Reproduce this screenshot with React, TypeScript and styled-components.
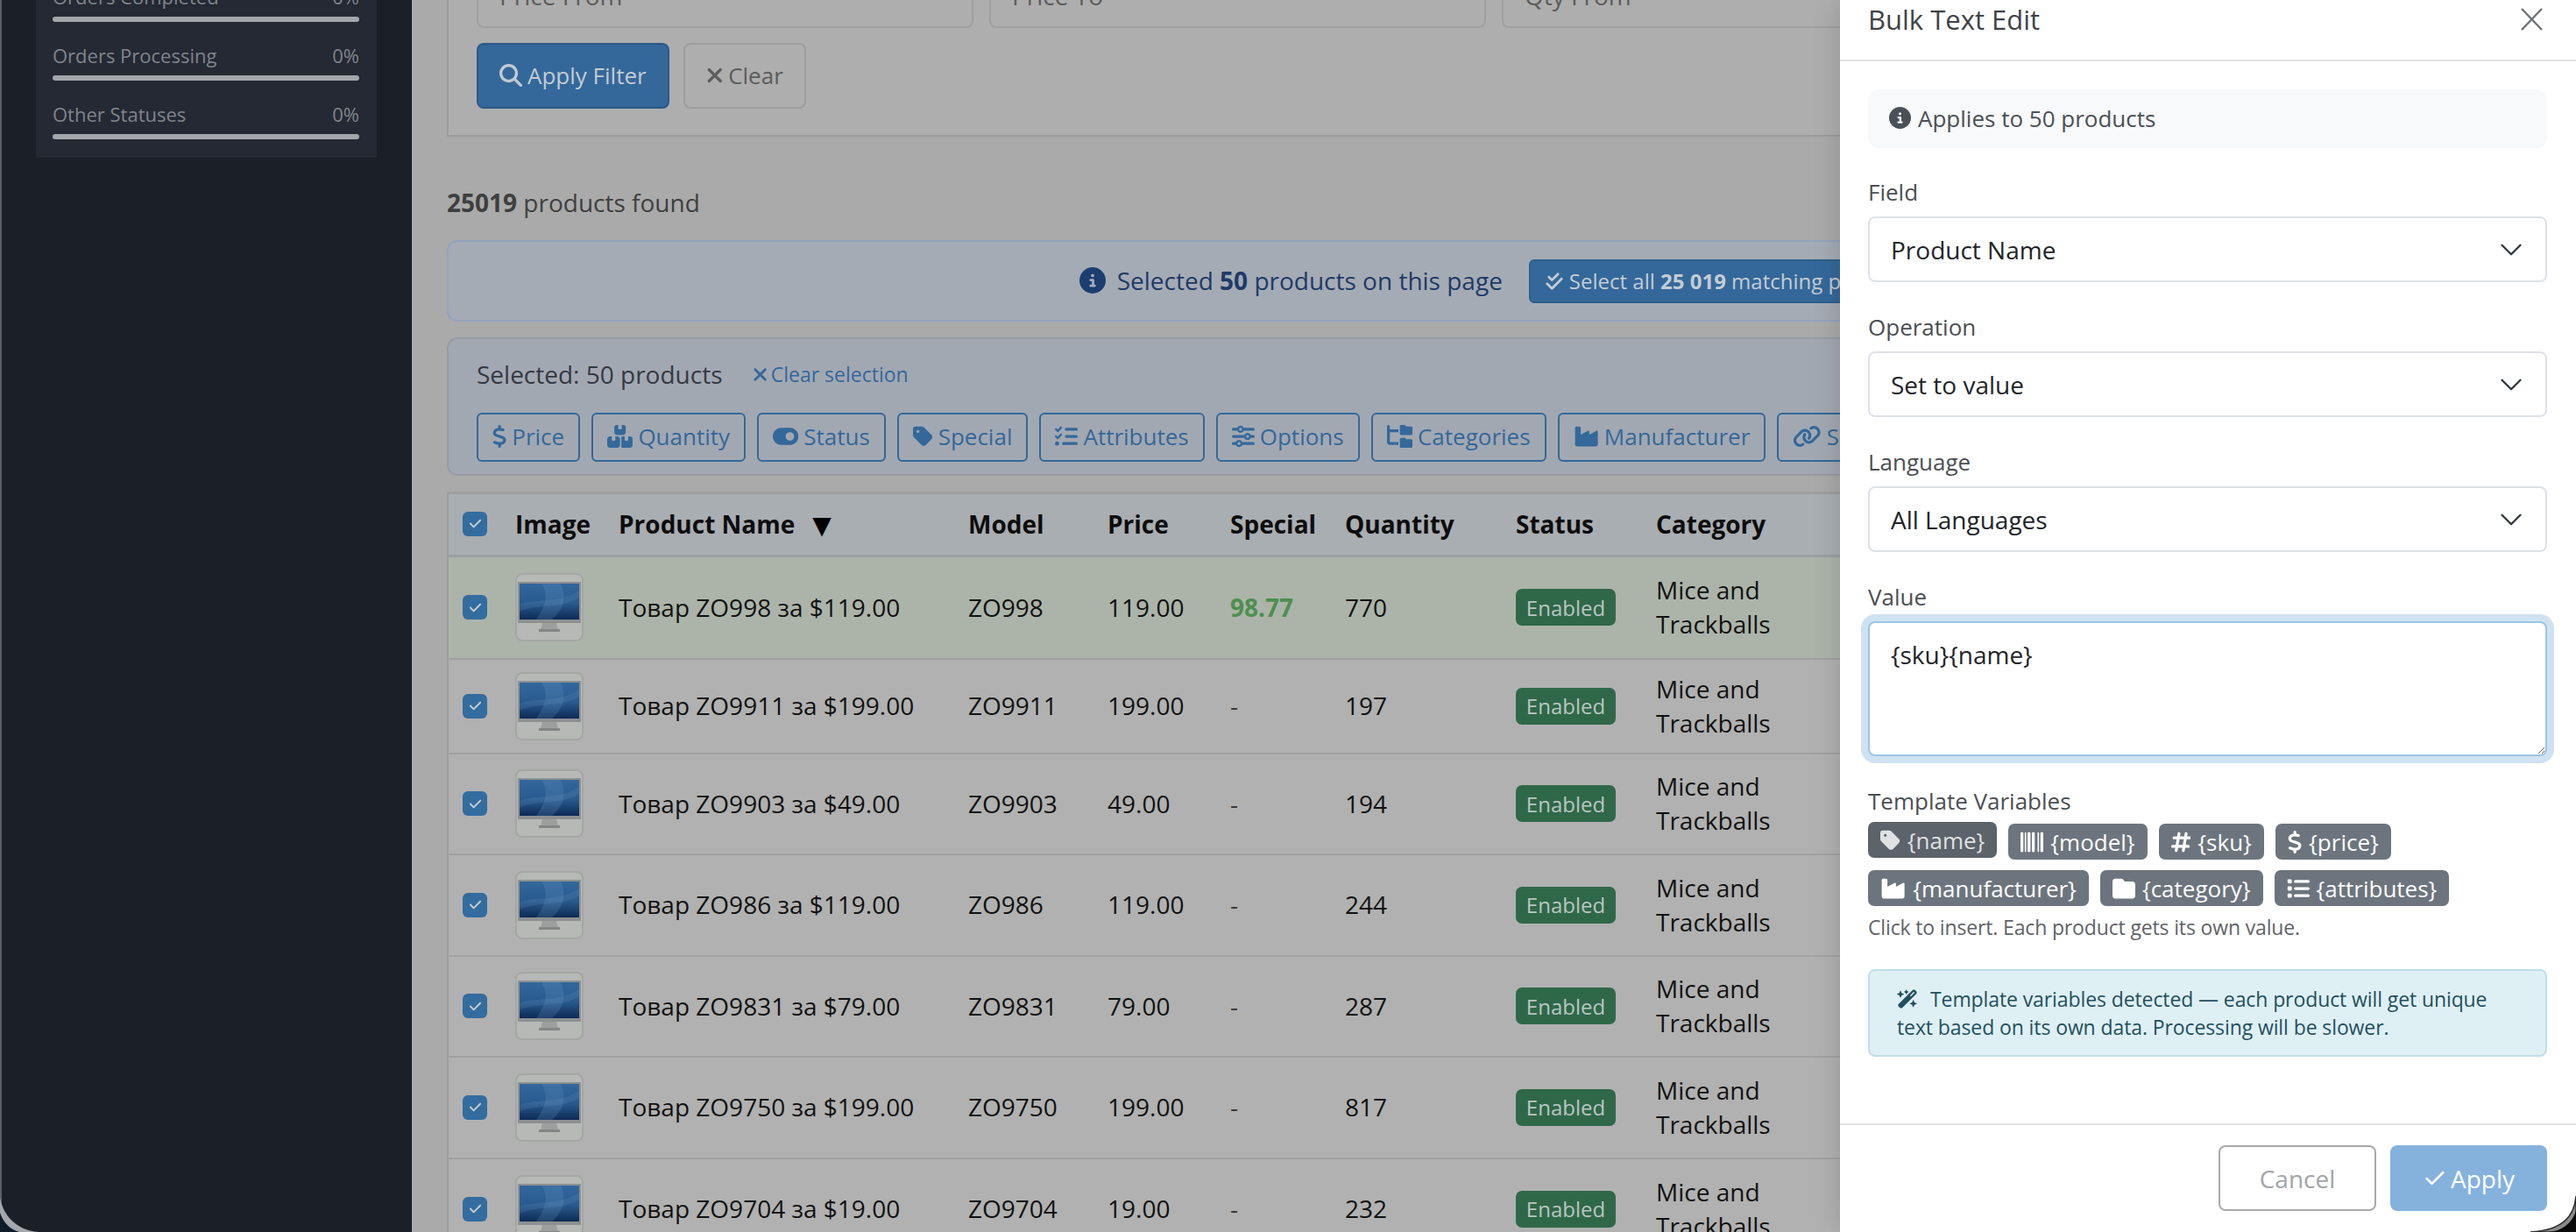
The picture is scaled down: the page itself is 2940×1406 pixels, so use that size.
import React from "react";
import styled, { createGlobalStyle } from "styled-components";
import { Check } from "lucide-react";
import {
  FaMagnifyingGlass, FaXmark, FaDollarSign, FaBoxesStacked, FaToggleOn, FaTag, FaListCheck, FaSliders,
  FaFolderTree, FaIndustry, FaLink, FaCircleInfo, FaCheckDouble, FaBarcode, FaHashtag, FaFolder, FaList,
  FaWandMagicSparkles, FaCheck,
} from "react-icons/fa6";

const Global = createGlobalStyle`
  html, body { margin: 0; padding: 0; background: #1b1f27; }
  body { font-family: "Open Sans", "Noto Sans", sans-serif; font-size: 28px; }
  * { box-sizing: border-box; }
`;

/* Icons keep the natural proportions of their glyph, as an icon font would draw them. */
const IconDollar = styled(FaDollarSign)`width: 0.625em; height: 1em; flex: none;`;
const IconBoxes = styled(FaBoxesStacked)`width: 1.125em; height: 1em; flex: none;`;
const IconToggle = styled(FaToggleOn)`width: 1.125em; height: 1em; flex: none;`;
const IconTag = styled(FaTag)`width: 0.875em; height: 1em; flex: none;`;
const IconListCheck = styled(FaListCheck)`width: 1em; height: 1em; flex: none;`;
const IconSliders = styled(FaSliders)`width: 1em; height: 1em; flex: none;`;
const IconTree = styled(FaFolderTree)`width: 1.125em; height: 1em; flex: none;`;
const IconIndustry = styled(FaIndustry)`width: 1.125em; height: 1em; flex: none;`;
const IconLink = styled(FaLink)`width: 1.25em; height: 1em; flex: none;`;
const IconXmark = styled(FaXmark)`width: 0.75em; height: 1em; flex: none;`;
const IconHash = styled(FaHashtag)`width: 0.875em; height: 1em; flex: none;`;

const Page = styled.div`
  position: relative;
  width: 2940px;
  height: 1406px;
  overflow: hidden;
  display: flex;
  background: #aaaaaa;
`;

const Sidebar = styled.aside`
  flex: 0 0 470px;
  background: #1b1f27;
  border-left: 2px solid #5c5f64;
  padding-left: 39px;
`;

const StatCard = styled.div`
  width: 389px;
  margin-top: -30px;
  padding: 11px 20px 21px 19px;
  background: #242933;
`;

const StatRow = styled.div`
  margin-bottom: 23px;
  &:last-child { margin-bottom: 0; }
`;

const StatHead = styled.div`
  display: flex;
  justify-content: space-between;
  font-size: 22px;
  line-height: 30px;
  color: #80848b;
`;

const StatBar = styled.div`
  height: 6px;
  margin-top: 8px;
  border-radius: 3px;
  background: #a3a6aa;
`;

const Main = styled.main`
  flex: 1;
  min-width: 0;
  padding-left: 40px;
`;

const Column = styled.div`
  width: 2416px;
  margin-top: -77px;
`;

const FilterCard = styled.section`
  border: 2px solid #9c9c9c;
  background: #aeaeae;
  padding: 32px 32px 30px;
`;

const FilterGrid = styled.div`
  display: grid;
  grid-template-columns: repeat(4, 567px);
  gap: 18px;
`;

const FilterInput = styled.input`
  height: 75px;
  padding: 0 24px;
  border: 2px solid #a0a0a0;
  border-radius: 8px;
  background: #aeaeae;
  font: 28px "Open Sans", sans-serif;
  &::placeholder { color: #5c5c5c; opacity: 1; }
`;

const FilterActions = styled.div`
  display: flex;
  gap: 16px;
  margin-top: 17px;
`;

const ActionButton = styled.button<{ $primary?: boolean }>`
  display: inline-flex;
  align-items: center;
  gap: 6px;
  height: 75px;
  padding: 0 24px 2px;
  border: 2px solid ${(p) => (p.$primary ? "#2b5a87" : "#9d9d9d")};
  border-radius: 8px;
  background: ${(p) => (p.$primary ? "#34689a" : "transparent")};
  color: ${(p) => (p.$primary ? "#c3cbd3" : "#5c5c5c")};
  font: 26px "Open Sans", sans-serif;
`;

const FoundText = styled.div`
  margin: 55px 0 23px;
  font-size: 28px;
  line-height: 40px;
  color: #3f3f3f;
  b { font-weight: 700; }
`;

const SelectAlert = styled.div`
  display: flex;
  align-items: center;
  justify-content: center;
  gap: 30px;
  height: 93px;
  border: 2px solid #93a3bf;
  border-radius: 12px;
  background: #a5abb4;
`;

const AlertText = styled.span`
  display: inline-flex;
  align-items: center;
  gap: 13px;
  padding-bottom: 2px;
  color: #1e3a68;
  font-size: 28px;
  b { font-weight: 700; white-space: pre; }
`;

const AlertWords = styled.span`
  white-space: pre;
`;

const SelectAllButton = styled.button`
  display: inline-flex;
  align-items: center;
  gap: 6px;
  height: 50px;
  padding: 0 16px;
  border: 2px solid #2d5f8e;
  border-radius: 6px;
  background: #34689a;
  color: #c4ccd4;
  font: 24px "Open Sans", sans-serif;
  white-space: pre;
  b { font-weight: 700; }
`;

const BulkBar = styled.div`
  height: 158px;
  margin-top: 18px;
  padding: 20px 32px 0;
  border: 2px solid #979ca4;
  border-radius: 12px;
  background: #a2a8b2;
`;

const BulkHead = styled.div`
  display: flex;
  align-items: center;
  gap: 34px;
  height: 40px;
  color: #343a42;
  font-size: 28px;
`;

const ClearLink = styled.span`
  display: inline-flex;
  align-items: center;
  gap: 4px;
  font-size: 23px;
  color: #34689a;
`;

const BulkActions = styled.div`
  display: flex;
  gap: 13px;
  margin-top: 24px;
`;

const BulkButton = styled.button`
  flex: none;
  display: inline-flex;
  align-items: center;
  gap: 6px;
  height: 56px;
  padding: 0 16px 2px;
  border: 2px solid #34689a;
  border-radius: 6px;
  background: transparent;
  color: #34689a;
  font: 26px "Open Sans", sans-serif;
`;

const Table = styled.table`
  width: 2403px;
  margin-top: 18px;
  table-layout: fixed;
  border-collapse: collapse;
  border-top: 3px solid #9e9e9e;
  border-left: 2px solid #9e9e9e;
`;

const Col = styled.col<{ $w: number }>`
  width: ${(p) => p.$w}px;
`;

const HeadRow = styled.tr`
  height: 72px;
  background: #a9aeb2;
  border-bottom: 3px solid #9aa0a5;
`;

const HeadCell = styled.th`
  padding: 0 0 2px 15px;
  text-align: left;
  font-size: 28px;
  font-weight: 700;
  color: #0d0d0d;
  white-space: nowrap;
`;

const SortMark = styled.span`
  margin-left: 20px;
  font-family: "DejaVu Sans", sans-serif;
  font-size: 28px;
  color: #000;
`;

const Row = styled.tr<{ $h: number; $hit?: boolean }>`
  height: ${(p) => p.$h}px;
  background: ${(p) => (p.$hit ? "#acb4a9" : "#b1b1b1")};
  border-bottom: 2px solid #a1a1a1;
`;

const Cell = styled.td`
  padding: 0 0 0 15px;
  font-size: 28px;
  line-height: 39px;
  color: #111111;
  vertical-align: middle;
`;

const CheckBox = styled.span`
  display: flex;
  align-items: center;
  justify-content: center;
  width: 28px;
  height: 28px;
  margin-left: 1px;
  border-radius: 6px;
  background: #336c9e;
  color: #c8ccd0;
  font-size: 15px;
`;

const Thumb = styled.div`
  width: 78px;
  height: 78px;
  border: 2px solid #a4a7a4;
  border-radius: 8px;
  overflow: hidden;
  background: #b7b9b6;
  svg { display: block; }
`;

const SpecialPrice = styled.span`
  font-weight: 700;
  color: #4e8f4e;
`;

const Dash = styled.span`
  color: #3a3a3a;
`;

const Badge = styled.span`
  display: inline-flex;
  align-items: center;
  justify-content: center;
  width: 114px;
  height: 42px;
  border-radius: 7px;
  background: #2f6849;
  color: #b9c6bf;
  font-size: 24px;
`;

const Panel = styled.aside`
  position: absolute;
  top: 0;
  right: 0;
  bottom: 0;
  width: 840px;
  display: flex;
  flex-direction: column;
  background: #fff;
  color: #212529;
  box-shadow: 0 0 30px rgba(0, 0, 0, 0.16);
`;

const PanelHead = styled.header`
  flex: none;
  display: flex;
  align-items: center;
  justify-content: space-between;
  height: 70px;
  padding: 0 38px 24px 32px;
  border-bottom: 2px solid #e3e4e6;
`;

const PanelTitle = styled.div`
  font-size: 31px;
  line-height: 40px;
  font-weight: 500;
  color: #3f4347;
`;

const CloseIcon = styled.svg`
  width: 25px;
  height: 26px;
  color: #6e7174;
`;

const PanelBody = styled.div`
  flex: 1;
  min-height: 0;
  padding: 32px 33px 0 32px;
`;

const InfoBox = styled.div`
  display: flex;
  align-items: center;
  gap: 8px;
  height: 67px;
  padding: 0 0 2px 24px;
  border-radius: 12px;
  background: #f8f9fa;
  font-size: 26px;
  color: #495057;
`;

const FieldLabel = styled.label<{ $top?: number }>`
  display: block;
  margin: ${(p) => p.$top ?? 33}px 0 10px;
  font-size: 26px;
  line-height: 36px;
  font-weight: 500;
  color: #4b4f53;
`;

const Select = styled.select`
  display: block;
  width: 100%;
  height: 75px;
  padding: 0 24px;
  appearance: none;
  border: 2px solid #dee2e6;
  border-radius: 8px;
  background: #fff url("data:image/svg+xml,%3csvg xmlns='http://www.w3.org/2000/svg' viewBox='0 0 16 16'%3e%3cpath fill='none' stroke='%23343a40' stroke-linecap='round' stroke-linejoin='round' stroke-width='1.4' d='m2 5 6 6 6-6'/%3e%3c/svg%3e") no-repeat right 25px center / 28px 28px;
  color: #212529;
  font: 28px "Open Sans", sans-serif;
`;

const ValueArea = styled.textarea`
  display: block;
  width: 100%;
  height: 154px;
  padding: 17px 24px;
  border: 2px solid #9ec5e3;
  border-radius: 8px;
  box-shadow: 0 0 0 8px #cfe2f1;
  outline: none;
  color: #212529;
  font: 28px/39px "Open Sans", sans-serif;
`;

const ChipRow = styled.div<{ $top: number }>`
  display: flex;
  gap: 13px;
  margin-top: ${(p) => p.$top}px;
`;

const Chip = styled.span<{ $active?: boolean }>`
  display: inline-flex;
  align-items: center;
  gap: 8px;
  height: 41px;
  padding: 0 14px;
  border-radius: 7px;
  background: ${(p) => (p.$active ? "#5c636a" : "#6c757d")};
  color: ${(p) => (p.$active ? "#dfe1e3" : "#fff")};
  font-size: 26px;
  transform: translateY(${(p) => (p.$active ? "-2px" : "0")});
`;

const Hint = styled.div`
  margin-top: 8px;
  font-size: 23px;
  line-height: 32px;
  letter-spacing: -0.15px;
  color: #5f6368;
`;

const InfoAlert = styled.div`
  margin-top: 32px;
  padding: 16px 31px;
  border: 2px solid #bfdfe9;
  border-radius: 8px;
  background: #dff0f5;
  color: #23505e;
  font-size: 23px;
  line-height: 32px;
  letter-spacing: -0.1px;
  svg { margin-right: 14px; vertical-align: -3px; }
`;

const PanelFoot = styled.footer`
  flex: none;
  display: flex;
  justify-content: flex-end;
  gap: 16px;
  height: 124px;
  padding: 23px 33px 0 0;
  border-top: 2px solid #e3e4e6;
`;

const FootButton = styled.button<{ $primary?: boolean }>`
  display: inline-flex;
  align-items: center;
  justify-content: center;
  gap: 4px;
  width: ${(p) => (p.$primary ? 179 : 180)}px;
  height: 75px;
  border: 2px solid ${(p) => (p.$primary ? "#85b2dd" : "#a8a9ab")};
  border-radius: 8px;
  background: ${(p) => (p.$primary ? "#85b2dd" : "#fff")};
  color: ${(p) => (p.$primary ? "#fff" : "#a2a5a8")};
  font: 28px "Open Sans", sans-serif;
`;

const CornerLeft = styled.svg`
  position: absolute;
  left: 0;
  bottom: 0;
  width: 50px;
  height: 44px;
  pointer-events: none;
`;

const CornerRight = styled.svg`
  position: absolute;
  right: 0;
  bottom: 0;
  width: 60px;
  height: 50px;
  pointer-events: none;
`;

const products = [
  { m: "ZO998", t: "$119.00", p: "119.00", s: "98.77", q: 770, h: 117 },
  { m: "ZO9911", t: "$199.00", p: "199.00", q: 197, h: 108 },
  { m: "ZO9903", t: "$49.00", p: "49.00", q: 194, h: 115 },
  { m: "ZO986", t: "$119.00", p: "119.00", q: 244, h: 116 },
  { m: "ZO9831", t: "$79.00", p: "79.00", q: 287, h: 115 },
  { m: "ZO9750", t: "$199.00", p: "199.00", q: 817, h: 116 },
  { m: "ZO9704", t: "$19.00", p: "19.00", q: 232, h: 116 },
];

const colWidths = [62, 118, 399, 159, 140, 131, 195, 160, 165, 974];

const stats = ["Orders Completed", "Orders Processing", "Other Statuses"];

const bulkActions = [
  { icon: <IconDollar />, label: "Price" },
  { icon: <IconBoxes />, label: "Quantity" },
  { icon: <IconToggle />, label: "Status" },
  { icon: <IconTag />, label: "Special" },
  { icon: <IconListCheck />, label: "Attributes" },
  { icon: <IconSliders />, label: "Options" },
  { icon: <IconTree />, label: "Categories" },
  { icon: <IconIndustry />, label: "Manufacturer" },
  { icon: <IconLink />, label: "SEO" },
];

const MonitorPicture: React.FC<{ id: string }> = ({ id }) => (
  <svg width="74" height="74" viewBox="0 0 74 74">
    <defs>
      <linearGradient id={id} x1="0" y1="0" x2="0" y2="1">
        <stop offset="0" stopColor="#33679c" />
        <stop offset="0.55" stopColor="#285a8e" />
        <stop offset="1" stopColor="#0e2a55" />
      </linearGradient>
    </defs>
    <rect x="1" y="8" width="72" height="47" fill="#8d9092" />
    <rect x="3" y="10" width="68" height="41" fill={`url(#${id})`} />
    <path d="M28 10 C36 22 34 34 22 51 L40 51 C52 40 58 28 50 10 Z" fill="#6f9cc8" opacity="0.22" />
    <path d="M3 34 C22 26 46 34 71 18 L71 26 C48 40 24 32 3 42 Z" fill="#7ea8d0" opacity="0.14" />
    <polygon points="29,55 45,55 47,63 27,63" fill="#9d9e9e" />
    <rect x="25" y="62" width="24" height="3" fill="#848585" />
  </svg>
);

export default function App() {
  return (
    <Page>
      <Global />
      <Sidebar>
        <StatCard>
          {stats.map((s) => (
            <StatRow key={s}>
              <StatHead>
                <span>{s}</span>
                <span>0%</span>
              </StatHead>
              <StatBar />
            </StatRow>
          ))}
        </StatCard>
      </Sidebar>
      <Main>
        <Column>
          <FilterCard>
            <FilterGrid>
              <FilterInput placeholder="Price From" />
              <FilterInput placeholder="Price To" />
              <FilterInput placeholder="Qty From" />
              <FilterInput placeholder="Qty To" />
            </FilterGrid>
            <FilterActions>
              <ActionButton $primary>
                <FaMagnifyingGlass />
                Apply Filter
              </ActionButton>
              <ActionButton>
                <IconXmark />
                Clear
              </ActionButton>
            </FilterActions>
          </FilterCard>
          <FoundText>
            <b>25019</b> products found
          </FoundText>
          <SelectAlert>
            <AlertText>
              <FaCircleInfo size={30} color="#1c3d70" />
              <AlertWords>
                Selected <b>50</b> products on this page
              </AlertWords>
            </AlertText>
            <SelectAllButton>
              <FaCheckDouble size={22} />
              <span>
                Select all <b>25 019</b> matching products
              </span>
            </SelectAllButton>
          </SelectAlert>
          <BulkBar>
            <BulkHead>
              <span>Selected: 50 products</span>
              <ClearLink>
                <IconXmark />
                Clear selection
              </ClearLink>
            </BulkHead>
            <BulkActions>
              {bulkActions.map((a) => (
                <BulkButton key={a.label}>
                  {a.icon}
                  {a.label}
                </BulkButton>
              ))}
            </BulkActions>
          </BulkBar>
          <Table>
            <colgroup>
              {colWidths.map((w, i) => (
                <Col key={i} $w={w} />
              ))}
            </colgroup>
            <thead>
              <HeadRow>
                <HeadCell>
                  <CheckBox>
                    <FaCheck />
                  </CheckBox>
                </HeadCell>
                <HeadCell>Image</HeadCell>
                <HeadCell>
                  Product Name<SortMark>▼</SortMark>
                </HeadCell>
                <HeadCell>Model</HeadCell>
                <HeadCell>Price</HeadCell>
                <HeadCell>Special</HeadCell>
                <HeadCell>Quantity</HeadCell>
                <HeadCell>Status</HeadCell>
                <HeadCell>Category</HeadCell>
                <HeadCell />
              </HeadRow>
            </thead>
            <tbody>
              {products.map((r, i) => (
                <Row key={r.m} $h={r.h} $hit={!!r.s}>
                  <Cell>
                    <CheckBox>
                      <FaCheck />
                    </CheckBox>
                  </Cell>
                  <Cell>
                    <Thumb>
                      <MonitorPicture id={`screen-${i}`} />
                    </Thumb>
                  </Cell>
                  <Cell>
                    Товар {r.m} за {r.t}
                  </Cell>
                  <Cell>{r.m}</Cell>
                  <Cell>{r.p}</Cell>
                  <Cell>{r.s ? <SpecialPrice>{r.s}</SpecialPrice> : <Dash>-</Dash>}</Cell>
                  <Cell>{r.q}</Cell>
                  <Cell>
                    <Badge>Enabled</Badge>
                  </Cell>
                  <Cell>Mice and Trackballs</Cell>
                  <Cell />
                </Row>
              ))}
            </tbody>
          </Table>
        </Column>
      </Main>
      <Panel>
        <PanelHead>
          <PanelTitle>Bulk Text Edit</PanelTitle>
          <CloseIcon viewBox="0 0 25 26" fill="none" stroke="currentColor" strokeWidth="2.4">
            <path d="M1 1 L24 25 M24 1 L1 25" />
          </CloseIcon>
        </PanelHead>
        <PanelBody>
          <InfoBox>
            <FaCircleInfo size={25} />
            Applies to 50 products
          </InfoBox>
          <FieldLabel $top={32}>Field</FieldLabel>
          <Select defaultValue="name">
            <option value="name">Product Name</option>
          </Select>
          <FieldLabel>Operation</FieldLabel>
          <Select defaultValue="set">
            <option value="set">Set to value</option>
          </Select>
          <FieldLabel>Language</FieldLabel>
          <Select defaultValue="all">
            <option value="all">All Languages</option>
          </Select>
          <FieldLabel>Value</FieldLabel>
          <ValueArea defaultValue="{sku}{name}" />
          <FieldLabel>Template Variables</FieldLabel>
          <ChipRow $top={-2}>
            <Chip $active><IconTag />{"{name}"}</Chip>
            <Chip><FaBarcode />{"{model}"}</Chip>
            <Chip><IconHash />{"{sku}"}</Chip>
            <Chip><IconDollar />{"{price}"}</Chip>
          </ChipRow>
          <ChipRow $top={12}>
            <Chip><IconIndustry />{"{manufacturer}"}</Chip>
            <Chip><FaFolder />{"{category}"}</Chip>
            <Chip><FaList />{"{attributes}"}</Chip>
          </ChipRow>
          <Hint>Click to insert. Each product gets its own value.</Hint>
          <InfoAlert>
            <FaWandMagicSparkles size={24} />
            Template variables detected — each product will get unique text based on its own data. Processing will be slower.
          </InfoAlert>
        </PanelBody>
        <PanelFoot>
          <FootButton>Cancel</FootButton>
          <FootButton $primary>
            <Check size={28} strokeWidth={2.2} />
            Apply
          </FootButton>
        </PanelFoot>
      </Panel>
      <CornerLeft viewBox="0 0 50 44">
        <path d="M0 4 C3 24 18 42 44 44 L0 44 Z" fill="#a4a7ab" />
        <path d="M0 22 C4 34 12 41 22 44 L0 44 Z" fill="#0d1a28" />
      </CornerLeft>
      <CornerRight viewBox="0 0 60 50">
        <path d="M60 9 C58 32 45 48 8 50 L60 50 Z" fill="#8a8a8a" stroke="#2a2a2a" strokeWidth="1.5" />
        <path d="M60 26 C55 40 45 48 30 50 L60 50 Z" fill="#0a0a0a" />
      </CornerRight>
    </Page>
  );
}
